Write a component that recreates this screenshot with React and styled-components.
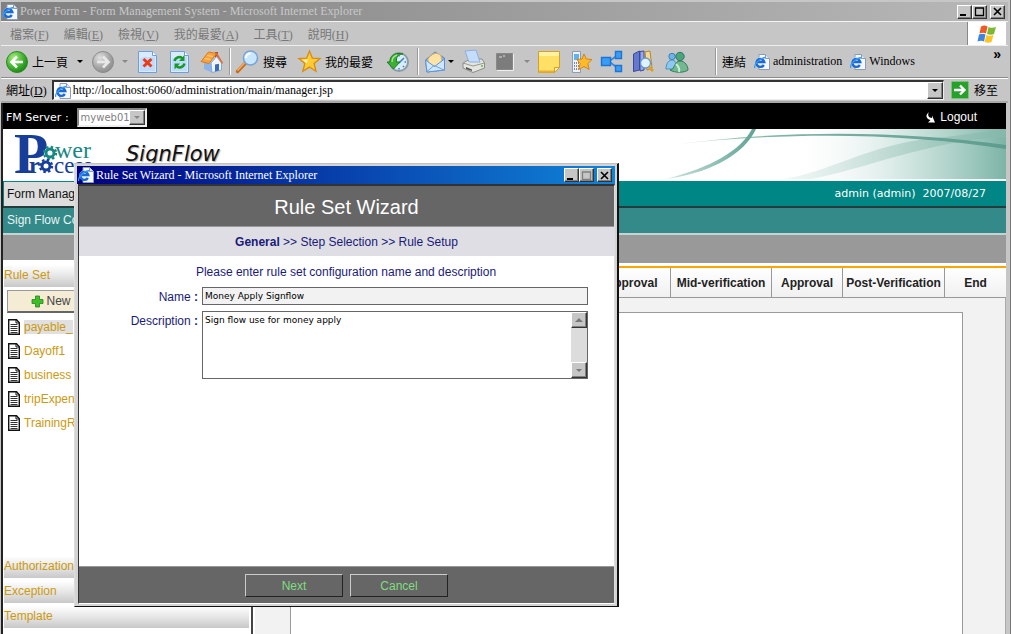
import React from "react";
import styled, { createGlobalStyle, css } from "styled-components";

const sans = `"Liberation Sans", Arial, "Noto Sans CJK TC", sans-serif`;
const serif = `"Liberation Serif", "Times New Roman", "Noto Sans CJK TC", serif`;
const verdana = `"DejaVu Sans", Verdana, sans-serif`;

const Global = createGlobalStyle`
  * { box-sizing: border-box; }
  body { margin: 0; background: #c0c0c0; overflow: hidden; }
  button, input, textarea, select { margin: 0; padding: 0; border: 0; border-radius: 0; font: inherit; color: inherit; }
  a { color: inherit; text-decoration: none; }
`;

const raised = css`
  border: 1px solid;
  border-color: #fff #333 #333 #fff;
  box-shadow: inset -1px -1px 0 #808080;
  background: #c6c6c6;
`;

/* ---------- browser window ---------- */

const Browser = styled.div`
  position: relative;
  display: flex;
  flex-direction: column;
  min-height: 100vh;
  padding: 2px 2px 0 1px;
  border-right: 1px solid #777;
  background: #c6c6c6;
  font: 12px ${serif};
`;

const TitleBar = styled.header`
  display: flex;
  align-items: center;
  height: ${(p) => (p.$active ? 18 : 19)}px;
  padding: 0 3px 0 1px;
  background: ${(p) => (p.$active ? "linear-gradient(90deg, #000080, #1084d8)" : "linear-gradient(90deg, #808080, #b8b8b8)")};
  color: ${(p) => (p.$active ? "#fff" : "#c8c8c8")};
  font: 12px ${serif};
`;

const TitleText = styled.span`
  flex: 1;
  margin-left: 2px;
  white-space: nowrap;
`;

const TitleButton = styled.button`
  ${raised}
  display: grid;
  place-items: center;
  width: 15px;
  height: 14px;
  margin-left: ${(p) => (p.$gap ? 3 : 0)}px;
`;

const MenuBar = styled.nav`
  display: flex;
  align-items: stretch;
  height: 25px;
  border-top: 1px solid #f4f4f4;
  border-bottom: 1px solid #eee;
  padding-left: 9px;
  gap: 15px;
  color: #777;
`;

const MenuItem = styled.button`
  background: none;
  white-space: nowrap;
`;

const Brand = styled.div`
  display: grid;
  place-items: center;
  width: 39px;
  margin-left: auto;
  margin-right: 2px;
  border-left: 1px solid #888;
  background: #fff;
`;

const ToolBar = styled.div`
  display: flex;
  height: 32px;
  padding-left: 5px;
  border-bottom: 1px solid #8c8c8c;
`;

const Tool = styled.button`
  display: flex;
  align-items: center;
  gap: 4px;
  flex: none;
  width: ${(p) => p.$w}px;
  background: none;
  color: #000;
  white-space: nowrap;
`;

const Divider = styled.span`
  flex: none;
  width: 2px;
  margin: 2px 5px 2px 0;
  border-left: 1px solid #999;
  border-right: 1px solid #fff;
`;

const Links = styled.div`
  display: flex;
  flex: 1;
  align-items: center;
`;

const LinkItem = styled.a`
  display: flex;
  align-items: center;
  gap: 3px;
  margin-left: 8px;
`;

const More = styled.button`
  align-self: flex-start;
  margin: 0 7px 0 auto;
  background: none;
  font: bold 14px ${sans};
`;

const AddressBar = styled.form`
  display: flex;
  align-items: center;
  gap: 5px;
  height: 25px;
  padding: 0 10px 0 5px;
  border-top: 1px solid #fff;
  border-bottom: 2px solid #a8a8a8;
`;

const AddressBox = styled.div`
  display: flex;
  flex: 1;
  align-items: center;
  gap: 2px;
  height: 20px;
  border: 1px solid;
  border-color: #333 #eee #eee #333;
  border-top-width: 2px;
  border-left-width: 2px;
  background: #fff;
  padding: 0 0 0 1px;
`;

const AddressInput = styled.input`
  flex: 1;
  min-width: 0;
  outline: 0;
  background: none;
`;

const ArrowButton = styled.button`
  ${raised}
  display: grid;
  place-items: center;
  flex: none;
  width: 16px;
  height: ${(p) => p.$h || 17}px;
`;

const Go = styled.button`
  display: flex;
  align-items: center;
  gap: 5px;
  margin-left: 2px;
  background: none;
`;

/* ---------- web page ---------- */

const Page = styled.div`
  display: flex;
  flex-direction: column;
  flex: 1;
  margin: 0 2px 0 0;
  border-left: 2px solid #222;
  border-right: 0;
  background: #fff;
  font: 12px ${sans};
`;

const ServerBar = styled.div`
  display: flex;
  align-items: center;
  gap: 8px;
  height: 26px;
  padding: 2px 29px 0 3px;
  background: #000;
  color: #fff;
`;

const ServerLabel = styled.label`
  font: 11px ${verdana};
`;

const SelectBox = styled.div`
  display: flex;
  align-items: center;
  width: 70px;
  height: 19px;
  border: 2px solid;
  border-color: #888 #eee #eee #888;
  background: #fff;
  color: #808080;
`;

const ServerSelect = styled.select`
  flex: 1;
  min-width: 0;
  padding-left: 2px;
  appearance: none;
  background: none;
  font: 10px ${verdana};
`;

const Logout = styled.a`
  display: flex;
  align-items: center;
  gap: 5px;
  margin-left: auto;
`;

const Banner = styled.div`
  display: flex;
  height: 52px;
  padding-left: 11px;
  background: #fff;
`;

const Product = styled.h1`
  margin: 12px 0 0 32px;
  font: oblique 21px/26px ${verdana};
  color: #111;
  text-shadow: 1px 1px 1px #aaa;
`;

const Wave = styled.div`
  margin-left: auto;
  height: 50px;
`;

const UserBar = styled.div`
  display: flex;
  justify-content: space-between;
  align-items: center;
  height: 27px;
  padding-right: 20px;
  border-bottom: 2px solid #243c3c;
  background: #008684;
  color: #fff;
  font: 11px ${verdana};
  white-space: pre;
`;

const Tab = styled.a`
  display: flex;
  align-items: center;
  align-self: stretch;
  width: 120px;
  margin: 1px 0 0 1px;
  padding-left: 3px;
  background: #ddd;
  color: #111;
  font: 12px ${sans};
`;

const SubBar = styled.div`
  height: 27px;
  padding-left: 4px;
  border-bottom: 2px solid #c4d4d4;
  background: #338a88;
  color: #e8f4f4;
  line-height: 25px;
`;

const GrayBar = styled.div`
  height: 25px;
  background: #999;
`;

const Body = styled.div`
  display: flex;
  flex: 1;
`;

const Side = styled.aside`
  display: flex;
  flex-direction: column;
  gap: 3px;
  width: 250px;
  flex: none;
  padding: 5px 2px 6px 1px;
  border-right: 2px solid #444;
  color: #cc9a10;
`;

const Section = styled.button`
  flex: none;
  height: 22px;
  padding-bottom: 2px;
  background: linear-gradient(#fff, #e6e6e6 50%, #c8c8c8);
  text-align: left;
`;

const NewButton = styled.button`
  display: flex;
  align-items: center;
  justify-content: center;
  gap: 2px;
  width: 88px;
  height: 23px;
  margin-left: 3px;
  border: 1px solid #999;
  border-bottom: 2px solid #666;
  background: #f4ecd4;
  color: #444;
`;

const FileList = styled.ul`
  flex: 1;
  margin: 0;
  padding: 0 0 0 4px;
  list-style: none;
`;

const FileItem = styled.li`
  display: flex;
  align-items: center;
  gap: 4px;
  height: 24px;
  padding-bottom: 2px;
  a { background: ${(p) => (p.$selected ? "#e0e0e0" : "none")}; }
`;

const Main = styled.main`
  display: flex;
  flex-direction: column;
  flex: 1;
  margin-left: 2px;
  border-top: 3px solid #999;
`;

const Stages = styled.div`
  display: flex;
  justify-content: flex-end;
  height: 32px;
  margin-top: 3px;
  border-top: 2px solid #ffa500;
  border-bottom: 1px solid #999;
  background: linear-gradient(#fff, #f0f0f0);
`;

const Stage = styled.a`
  display: grid;
  place-items: center;
  flex: none;
  width: ${(p) => p.$w}px;
  border-left: 1px solid #999;
  color: #222;
  font-weight: bold;
`;

const Canvas = styled.div`
  display: flex;
  flex: 1;
  padding: 14px 42px 0 35px;
  border-right: 1px solid #aaa;
  background: #f2f2f2;
`;

const Sheet = styled.div`
  flex: 1;
  border: 1px solid #999;
  border-bottom: 0;
  background: #fff;
`;

/* ---------- wizard dialog ---------- */

const Dialog = styled.section`
  position: absolute;
  left: 74px;
  top: 163px;
  display: flex;
  flex-direction: column;
  width: 545px;
  height: 444px;
  padding: 2px;
  border: 1px solid;
  border-color: #c0c0c0 #111 #111 #ddd;
  border-right-width: 2px;
  background: #d4d4d4;
`;

const DialogPage = styled.div`
  display: flex;
  flex-direction: column;
  flex: 1;
  margin: 0 0 0 1px;
  border: 1px solid #333;
  border-top-width: 2px;
  border-right-color: #ddd;
  border-bottom-color: #fff;
  background: #fff;
  color: #1a1a78;
  font: 12px ${sans};
`;

const Heading = styled.h2`
  margin: 0;
  height: 41px;
  border-bottom: 1px solid #999;
  background: #666;
  color: #fff;
  font: 20px/42px ${sans};
  text-align: center;
`;

const Steps = styled.div`
  height: 29px;
  background: #dedee4;
  line-height: 30px;
  text-align: center;
`;

const Form = styled.form`
  display: flex;
  flex-direction: column;
  flex: 1;
`;

const Hint = styled.p`
  margin: 9px 0 8px;
  padding-right: 1px;
  line-height: 14px;
  text-align: center;
`;

const Field = styled.div`
  display: grid;
  grid-template-columns: 119px 386px;
  gap: 4px;
  margin-bottom: 6px;
`;

const FieldLabel = styled.label`
  padding-top: 3px;
  line-height: 15px;
  text-align: right;
  white-space: pre;
`;

const NameInput = styled.input`
  height: 18px;
  padding: 0 2px;
  border: 1px solid #666;
  background: #f2f2f2;
  color: #000;
  font: 9px ${verdana};
`;

const AreaBox = styled.div`
  display: flex;
  height: 68px;
  border: 1px solid #666;
  background: #fff;
`;

const Area = styled.textarea`
  flex: 1;
  padding: 2px;
  outline: 0;
  resize: none;
  overflow: hidden;
  background: none;
  color: #000;
  font: 9px/12px ${verdana};
`;

const Scroll = styled.div`
  display: flex;
  flex-direction: column;
  justify-content: space-between;
  width: 16px;
  background: #dcdcdc;
`;

const Footer = styled.footer`
  display: flex;
  justify-content: center;
  gap: 7px;
  height: 37px;
  margin-top: auto;
  padding: 7px 0;
  border-top: 1px solid #999;
  background: #666;
`;

const FootButton = styled.button`
  width: 98px;
  height: 23px;
  border: 1px solid;
  border-color: #ccc #222 #222 #ccc;
  background: #666;
  color: #7fdc7f;
`;

/* ---------- drawings ---------- */

const Drawing = styled.svg`
  display: block;
  flex: none;
  overflow: visible;
`;

const Svg = ({ w, h = w, v = `0 0 ${w} ${h}`, children }) => (
  <Drawing width={w} height={h} viewBox={v} fill="none" aria-hidden="true">{children}</Drawing>
);

const Down = ({ color = "#000" }) => <Svg w={6} h={3}><path d="M0 0h6L3 3z" fill={color} /></Svg>;
const Up = ({ color = "#777" }) => <Svg w={8} h={4}><path d="M0 4h8L4 0z" fill={color} /></Svg>;

const Minimize = () => <Svg w={9} h={9}><path d="M0 7h6v2H0z" fill="#000" /></Svg>;
const Maximize = ({ color = "#000" }) => <Svg w={9} h={9}><path d="M0.500 1h8v7.500h-8z M0 1h9" stroke={color} strokeWidth="1.300" /></Svg>;
const Close = () => <Svg w={9} h={9}><path d="M1 1l7 7M8 1L1 8" stroke="#000" strokeWidth="1.600" /></Svg>;

const IePage = ({ s = 16 }) => (
  <Svg w={s} v="0 0 16 16">
    <path d="M5 .5h6.500l4 4v11H5z" fill="#f4f8ff" stroke="#8c9cb4" />
    <path d="M11.500.5v4h4" fill="#dce6f0" stroke="#8c9cb4" />
    <circle cx="6.300" cy="8.500" r="5" fill="#e4f2ff" />
    <path d="M9.800 11a4 4 0 1 1 .5-3H3.500" stroke="#1c68d4" strokeWidth="2.400" />
    <path d="M.8 14C-.5 11 5.500 4 11.500 3.500" stroke="#3c98ec" strokeWidth="1.300" />
  </Svg>
);

const RoundArrow = ({ on }) => (
  <Svg w={22}>
    <defs>
      <radialGradient id={on ? "ra1" : "ra0"} cx=".35" cy=".3" r=".8">
        <stop stopColor={on ? "#a8ec80" : "#e0e0e0"} />
        <stop offset=".6" stopColor={on ? "#3cae2c" : "#a4a4a4"} />
        <stop offset="1" stopColor={on ? "#177c14" : "#888"} />
      </radialGradient>
    </defs>
    <circle cx="11" cy="11" r="10.500" fill={`url(#${on ? "ra1" : "ra0"})`} stroke={on ? "#2b8a20" : "#8c8c8c"} />
    <path d={on ? "M17 11H6M11 5.500L5.500 11l5.500 5.500" : "M5 11h11M11 5.500l5.500 5.500-5.500 5.500"} stroke={on ? "#fff" : "#e8e8e8"} strokeWidth="2.600" />
  </Svg>
);

const BlueSheet = ({ children }) => (
  <Svg w={19} h={22}>
    <path d="M.5.500h14l4 4v17H.5z" fill="#d8ebff" stroke="#6d9fe0" />
    <path d="M2 8c5-5 9 0 15-3v15H2z" fill="#bedcff" />
    <path d="M14.500.5v4h4" fill="#fff" stroke="#6d9fe0" />
    {children}
  </Svg>
);
const Stop = () => <BlueSheet><path d="M5.500 8l8 7.500M13.500 8l-8 7.500" stroke="#ec3a14" strokeWidth="3" /></BlueSheet>;
const Refresh = () => (
  <BlueSheet>
    <path d="M4.500 10c1-4 6-5 8-2.500M14.500 12.500c-1 4-6 5-8 2.500" stroke="#169a24" strokeWidth="2.500" />
    <path d="M14.500 4v6H9zM4.500 18.500v-6H10z" fill="#169a24" />
  </BlueSheet>
);
const Home = () => (
  <Svg w={23} h={23}>
    <path d="M15 2h3v6h-3z" fill="#b84a30" />
    <path d="M4 11v8l8 3.500V13z" fill="#8db4e8" />
    <path d="M11 13l5.500-6.500 5 6.500v7L12 22.500z" fill="#edf5ff" stroke="#86a8dc" />
    <path d="M1 11.500L8.500 2l8 1.500L9 13.500z" fill="#f8a43c" stroke="#dc7a1c" />
    <path d="M16.500 3.500l6 10" stroke="#e07030" strokeWidth="1.600" />
    <path d="M15 14.500l4-.8v6.800l-4 1z" fill="#3c6cb8" />
    <path d="M4.500 8.500l6 1M7 5.500l6 1" stroke="#ffd080" />
  </Svg>
);
const Search = () => (
  <Svg w={23} h={23}>
    <path d="M1.500 21.500l8-8.500" stroke="#c96c1c" strokeWidth="3.400" strokeLinecap="round" />
    <path d="M1.500 20.500l7-7.500" stroke="#f7b46c" strokeWidth="1.200" />
    <circle cx="14.500" cy="8" r="7" fill="#c9e6ff" stroke="#7aa4d8" strokeWidth="1.600" />
    <path d="M10 8c0-3 2-4.500 4.500-4.500" stroke="#fff" strokeWidth="2" />
  </Svg>
);
const Star = () => (
  <Svg w={23} h={23} v="0 0 24 24">
    <path d="M12 1l3 7.500 8 .5-6.200 5.200 2 8L12 17.800 5 22.200l2.200-8L1 9l8-.5z" fill="#ffcc34" stroke="#d88c10" strokeWidth="1.400" />
    <path d="M12 4l-1.800 6-6 .3 5 3.700z" fill="#fff2a8" />
  </Svg>
);
const History = () => (
  <Svg w={23} h={22}>
    <circle cx="13" cy="11" r="9" fill="#d9ecf8" stroke="#8c9ca4" strokeWidth="2" />
    <path d="M13 12l5-5M13 4v1.500M13 17v1.500M20 11h-1.500M18 16l-1-1" stroke="#3c80c8" strokeWidth="1.500" />
    <path d="M4 11C4 4 10 1 17 3c-5 0-7 3-6.500 8H14l-6.500 7L1 11z" fill="#3cb034" stroke="#1c7c20" />
    <path d="M6 11c0-4 2-6 5-7" stroke="#a4e48c" strokeWidth="1.500" />
  </Svg>
);
const Mail = () => (
  <Svg w={22} h={22}>
    <path d="M1.500 9L11 1l9.500 6v12L3 21z" fill="#7eb4f0" stroke="#5588d0" />
    <path d="M4 8c3-5 9-8 13-3l1 6-7 5-7-4z" fill="#ffe2a4" stroke="#e0b060" />
    <path d="M1.500 9l9 6.500 10-7.500v11L3 21z" fill="#cfe6ff" stroke="#5c94d8" />
    <path d="M3 20.500l7-6 10 4.500" stroke="#6fa4e4" />
  </Svg>
);
const Printer = () => (
  <Svg w={23} h={23}>
    <path d="M1 13l7-4h12l2.500 4v5L11 22.500 1 18z" fill="#e4e4e0" stroke="#8c8c88" />
    <path d="M3 1l11-1 4 12H7z" fill="#c4ddfa" stroke="#8cb0e0" />
    <path d="M1 13l10 3 11.500-3" stroke="#99998f" />
    <path d="M4 17l6 2.500v1.500l-6-2z" fill="#555" />
    <circle cx="20" cy="16" r="1" fill="#5cb848" />
  </Svg>
);
const EditBox = () => <Svg w={18} h={18}><path d="M.5.500h16v16H.5z" fill="#7c7c7c" stroke="#888" /><path d="M17.500 1v16.500H1" stroke="#eee" /><path d="M3 4h3M7 3h2" stroke="#ddd" /></Svg>;
const Note = () => (
  <Svg w={22} h={22}>
    <path d="M.5.500h21v16l-5 5H.5z" fill="#ffe066" stroke="#d8a020" />
    <path d="M1 1h20v4H1z" fill="#fff2a0" />
    <path d="M16.500 21.500v-5h5z" fill="#fff4b8" stroke="#d8a020" />
    <path d="M1 20.500h15" stroke="#e8b030" strokeWidth="2" />
  </Svg>
);
const Phone = () => (
  <Svg w={22} h={22}>
    <path d="M1.500.500h8v21h-8z" fill="#eef2f8" stroke="#8c9cb8" />
    <path d="M3 3h5v6H3z" fill="#58b4f4" />
    <path d="M3 12h5M3 15h5M3 18h5" stroke="#667" strokeWidth="1.500" strokeDasharray="1 1" />
    <path d="M13 3l2.300 5 5.700.5-4.200 4 1.300 6-5.100-3-5.200 3 1.300-6-3.300-4L11 8z" fill="#ffba28" stroke="#d88414" />
  </Svg>
);
const Network = () => (
  <Svg w={23} h={23}>
    <path d="M9 11.500l8-6M9 11.500l8 6" stroke="#3c84e0" strokeWidth="1.600" />
    <path d="M1.500 7.500h9v8h-9zM15.500 1.500h6v7h-6zM15.500 15.500h6v6h-6z" fill="#3a9cf4" stroke="#1c74d8" strokeWidth="1.400" />
  </Svg>
);
const Books = () => (
  <Svg w={23} h={23}>
    <path d="M1.500 4l6-3v19l-6 1.500z" fill="#6478d0" stroke="#3c4898" />
    <path d="M8 1.500l4-.5v19l-4 1z" fill="#98a8ec" stroke="#3c4898" />
    <path d="M13 2l5-1 2 17-5 2z" fill="#f4d894" stroke="#b08830" />
    <path d="M17 17l4 4" stroke="#e09c24" strokeWidth="2.800" />
    <circle cx="13.500" cy="13" r="5" fill="#dff2ff" stroke="#6c98c8" strokeWidth="1.300" />
  </Svg>
);
const Buddies = () => (
  <Svg w={24} h={22}>
    <circle cx="7" cy="5.500" r="3.200" fill="#6cb4ec" stroke="#3c80b8" />
    <path d="M1 18c0-6 3-9 6-9s5 3 5 9z" fill="#8cc8f0" stroke="#4c90c0" />
    <circle cx="15" cy="5.500" r="4.200" fill="#4ca47c" stroke="#28785c" />
    <path d="M5 19c5 0 4-9 10-9 5 0 8 5 8 9-4 3-13 3-18 0z" fill="#74b890" stroke="#307c60" />
    <path d="M11 13c3 3 4 5 3 8" stroke="#c8ecd8" strokeWidth="2" />
  </Svg>
);
const GoIcon = () => (
  <Svg w={18} h={18}>
    <rect x=".5" y=".5" width="17" height="17" rx="1" fill="#28a02c" stroke="#78c478" />
    <path d="M3 9h10M9 4.500L13.500 9 9 13.500" stroke="#fff" strokeWidth="2.400" />
  </Svg>
);
const Flag = () => (
  <Svg w={20} h={18}>
    <path d="M4 1.500c3-1.500 4.500-.8 6.500 0L9 8.500c-2-1-4-1-6.500 0z" fill="#ee5a24" />
    <path d="M11.500 2c2.500 1.200 5 1 7.500 0l-2 7c-2 1-4.500 1-7 0z" fill="#7cb830" />
    <path d="M2 9.500c2.500-1.200 4.500-1 6.500 0L7 16.500c-2-1.200-4-1-6.500 0z" fill="#3c84e0" />
    <path d="M9.500 10c2.500 1.200 5 1 7 0l-2 7c-2 1-4 1-7 0z" fill="#fcc424" />
  </Svg>
);
const Plus = () => <Svg w={13} h={13}><path d="M4.500 1h4v3.500H12v4H8.500V12h-4V8.500H1v-4h3.500z" fill="#3cc028" stroke="#2a8020" strokeWidth=".8" /></Svg>;
const Doc = () => (
  <Svg w={12} h={16}>
    <path d="M.7.700h7.800l2.800 3v11.600H.7z" fill="#fff" stroke="#111" strokeWidth="1.400" />
    <path d="M8 .7v3.300h3.300" stroke="#111" />
    <path d="M2.500 5.500h7M2.500 7.500h7M2.500 9.500h7M2.500 11.500h7M2.500 13.500h7" stroke="#333" />
  </Svg>
);
const LogoutIcon = () => <Svg w={9} h={11}><path d="M3 0c-2 3 0 6 3 6V3.500l3 7H2L4.500 8C0 7-1 3 3 0z" fill="#fff" /></Svg>;

const Gear = ({ x, y, color }) => (
  <g transform={`translate(${x} ${y})`}>
    <circle r="6" fill="#fff" />
    <circle r="4" stroke={color} strokeWidth="3" />
    <circle r="6" stroke={color} strokeWidth="2.400" strokeDasharray="2.400 2.310" />
  </g>
);
const Logo = () => (
  <Svg w={80} h={50}>
    <g fontFamily="Liberation Serif, serif">
      <text x="0" y="44" fontSize="56" fontWeight="bold" fill="#173f9a">P</text>
      <text x="41" y="29" fontSize="24" fill="#178884">wer</text>
      <text x="15" y="44" fontSize="24" fontWeight="bold" fill="#173f9a">r</text>
      <text x="40" y="44" fontSize="23" fill="#173f9a">cess</text>
    </g>
    <Gear x={36} y={24} color="#178884" />
    <Gear x={32} y={37} color="#173f9a" />
  </Svg>
);
const WaveArt = () => (
  <Svg w={340} h={50}>
    <defs>
      <linearGradient id="wv" x1="0" x2="1"><stop stopColor="#fff" stopOpacity="0" /><stop offset=".6" stopColor="#bcdad2" stopOpacity=".8" /><stop offset="1" stopColor="#7cb4a6" /></linearGradient>
      <linearGradient id="wl" x1="0" x2="1"><stop stopColor="#fff" /><stop offset=".2" stopColor="#88b8ac" /><stop offset="1" stopColor="#5c9c8e" /></linearGradient>
      <linearGradient id="wd" x1="0" x2="1"><stop stopColor="#cfe4de" /><stop offset="1" stopColor="#5fa394" /></linearGradient>
      <linearGradient id="ws" x1="0" x2="1"><stop stopColor="#cfe4de" stopOpacity=".3" /><stop offset="1" stopColor="#84b8aa" /></linearGradient>
    </defs>
    <path d="M120 0h220v50H118z" fill="url(#wv)" />
    <path d="M118 50c50-8 90-38 162-42l60-8v8C260 12 200 40 145 50z" fill="url(#ws)" />
    <path d="M4 16C120 0 240 2 340 16v4C240 4 120 2 4 16z" fill="url(#wl)" />
    <path d="M0 50C46 38 74 22 86 0h4C78 26 44 42 12 48z" fill="url(#wd)" />
  </Svg>
);

const menus = [["檔案", "F"], ["編輯", "E"], ["檢視", "V"], ["我的最愛", "A"], ["工具", "T"], ["說明", "H"]];
const files = ["payable_", "Dayoff1", "business", "tripExpen", "TrainingR"];
const stages = [["Approval", 78], ["Mid-verification", 101], ["Approval", 71], ["Post-Verification", 102], ["End", 62]];

export default function App() {
  return (
    <>
      <Global />
      <Browser>
        <TitleBar>
          <IePage />
          <TitleText>Power Form - Form Management System - Microsoft Internet Explorer</TitleText>
          <TitleButton aria-label="Minimize"><Minimize /></TitleButton>
          <TitleButton aria-label="Maximize"><Maximize /></TitleButton>
          <TitleButton aria-label="Close" $gap><Close /></TitleButton>
        </TitleBar>
        <MenuBar>
          {menus.map(([name, key]) => <MenuItem key={key}>{name}(<u>{key}</u>)</MenuItem>)}
          <Brand><Flag /></Brand>
        </MenuBar>
        <ToolBar>
          <Tool $w={71}><RoundArrow on />上一頁</Tool>
          <Tool $w={15} aria-label="Back list"><Down /></Tool>
          <Tool $w={30} aria-label="Forward"><RoundArrow /></Tool>
          <Tool $w={16} aria-label="Forward list"><Down color="#888" /></Tool>
          <Tool $w={32} aria-label="Stop"><Stop /></Tool>
          <Tool $w={30} aria-label="Refresh"><Refresh /></Tool>
          <Tool $w={29} aria-label="Home"><Home /></Tool>
          <Divider />
          <Tool $w={62}><Search />搜尋</Tool>
          <Tool $w={88}><Star />我的最愛</Tool>
          <Tool $w={31} aria-label="History"><History /></Tool>
          <Divider />
          <Tool $w={24} aria-label="Mail"><Mail /></Tool>
          <Tool $w={14} aria-label="Mail list"><Down /></Tool>
          <Tool $w={34} aria-label="Print"><Printer /></Tool>
          <Tool $w={28} aria-label="Edit"><EditBox /></Tool>
          <Tool $w={14} aria-label="Edit list"><Down color="#888" /></Tool>
          <Tool $w={33} aria-label="Note"><Note /></Tool>
          <Tool $w={29} aria-label="Mobile favorites"><Phone /></Tool>
          <Tool $w={32} aria-label="Network"><Network /></Tool>
          <Tool $w={33} aria-label="Research"><Books /></Tool>
          <Tool $w={50} aria-label="Messenger"><Buddies /></Tool>
          <Divider />
          <Links>
            連結
            <LinkItem href="#administration"><IePage />administration</LinkItem>
            <LinkItem href="#windows"><IePage />Windows</LinkItem>
            <More aria-label="More links">»</More>
          </Links>
        </ToolBar>
        <AddressBar onSubmit={(e) => e.preventDefault()}>
          <label htmlFor="url">網址(<u>D</u>)</label>
          <AddressBox>
            <IePage />
            <AddressInput id="url" defaultValue="http://localhost:6060/administration/main/manager.jsp" />
            <ArrowButton type="button" aria-label="Address list"><Down /></ArrowButton>
          </AddressBox>
          <Go type="submit"><GoIcon />移至</Go>
        </AddressBar>

        <Page>
          <ServerBar>
            <ServerLabel htmlFor="server">FM Server :</ServerLabel>
            <SelectBox>
              <ServerSelect id="server"><option>myweb01</option></ServerSelect>
              <ArrowButton $h={15} tabIndex={-1} aria-label="Server list"><Down color="#888" /></ArrowButton>
            </SelectBox>
            <Logout href="#logout"><LogoutIcon />Logout</Logout>
          </ServerBar>
          <Banner>
            <Logo />
            <Product>SignFlow</Product>
            <Wave><WaveArt /></Wave>
          </Banner>
          <UserBar>
            <Tab href="#form">Form Manag</Tab>
            <span>admin (admin)  2007/08/27</span>
          </UserBar>
          <SubBar>Sign Flow Co</SubBar>
          <GrayBar />
          <Body>
            <Side>
              <Section>Rule Set</Section>
              <NewButton><Plus />New</NewButton>
              <FileList>
                {files.map((f, i) => <FileItem key={f} $selected={i === 0}><Doc /><a href={`#${f}`}>{f}</a></FileItem>)}
              </FileList>
              <Section>Authorization</Section>
              <Section>Exception</Section>
              <Section>Template</Section>
            </Side>
            <Main>
              <Stages>
                {stages.map(([name, w], i) => <Stage key={i} href={`#stage${i}`} $w={w}>{name}</Stage>)}
              </Stages>
              <Canvas><Sheet /></Canvas>
            </Main>
          </Body>
        </Page>

        <Dialog role="dialog" aria-label="Rule Set Wizard">
          <TitleBar $active>
            <IePage />
            <TitleText>Rule Set Wizard - Microsoft Internet Explorer</TitleText>
            <TitleButton aria-label="Minimize dialog"><Minimize /></TitleButton>
            <TitleButton aria-label="Maximize dialog"><Maximize color="#808080" /></TitleButton>
            <TitleButton aria-label="Close dialog" $gap><Close /></TitleButton>
          </TitleBar>
          <DialogPage>
            <Heading>Rule Set Wizard</Heading>
            <Steps><b>General</b> &gt;&gt; Step Selection &gt;&gt; Rule Setup</Steps>
            <Form onSubmit={(e) => e.preventDefault()}>
              <Hint>Please enter rule set configuration name and description</Hint>
              <Field>
                <FieldLabel htmlFor="name">Name <b>:</b></FieldLabel>
                <NameInput id="name" defaultValue="Money Apply Signflow" />
              </Field>
              <Field>
                <FieldLabel htmlFor="description">Description <b>:</b></FieldLabel>
                <AreaBox>
                  <Area id="description" defaultValue="Sign flow use for money apply" />
                  <Scroll>
                    <ArrowButton type="button" $h={16} aria-label="Scroll up"><Up /></ArrowButton>
                    <ArrowButton type="button" $h={16} aria-label="Scroll down"><Down color="#777" /></ArrowButton>
                  </Scroll>
                </AreaBox>
              </Field>
              <Footer>
                <FootButton type="submit">Next</FootButton>
                <FootButton type="button">Cancel</FootButton>
              </Footer>
            </Form>
          </DialogPage>
        </Dialog>
      </Browser>
    </>
  );
}
